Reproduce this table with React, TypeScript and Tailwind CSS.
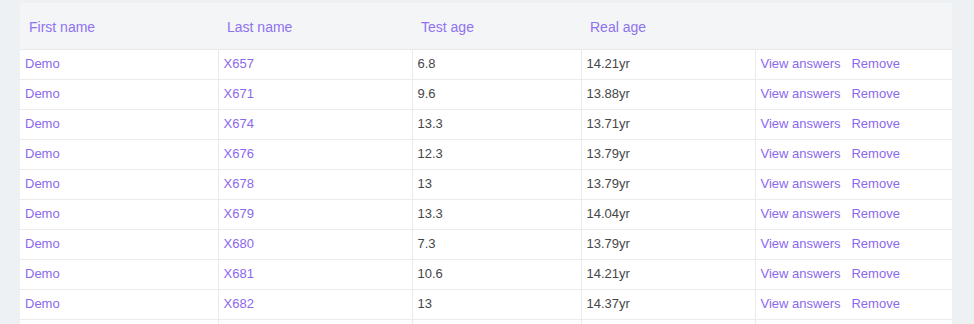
const rows = [
  { first: 'Demo', last: 'X657', test: '6.8', real: '14.21yr' },
  { first: 'Demo', last: 'X671', test: '9.6', real: '13.88yr' },
  { first: 'Demo', last: 'X674', test: '13.3', real: '13.71yr' },
  { first: 'Demo', last: 'X676', test: '12.3', real: '13.79yr' },
  { first: 'Demo', last: 'X678', test: '13', real: '13.79yr' },
  { first: 'Demo', last: 'X679', test: '13.3', real: '14.04yr' },
  { first: 'Demo', last: 'X680', test: '7.3', real: '13.79yr' },
  { first: 'Demo', last: 'X681', test: '10.6', real: '14.21yr' },
  { first: 'Demo', last: 'X682', test: '13', real: '14.37yr' },
  { first: 'Demo', last: 'X683', test: '11.2', real: '14.02yr' },
]

const headers = ['First name', 'Last name', 'Test age', 'Real age', '']

export default function App() {
  return (
    <div
      className="min-h-screen bg-[#eef1f4] pl-[20px] pr-[22px] pt-[3px]"
      style={{ fontFamily: '"Liberation Sans", Arial, sans-serif' }}
    >
      <table className="w-[932px] table-fixed border-collapse bg-white text-[13px]">
        <colgroup>
          <col className="w-[198px]" />
          <col className="w-[194px]" />
          <col className="w-[169px]" />
          <col className="w-[174px]" />
          <col className="w-[197px]" />
        </colgroup>
        <thead>
          <tr className="h-[46px] border-b border-[#e9e9eb] bg-[#f4f5f7]">
            {headers.map((h, i) => (
              <th
                key={i}
                className="px-[9px] pt-[4px] text-left text-[14px] font-normal text-[#8f72ef]"
              >
                {h}
              </th>
            ))}
          </tr>
        </thead>
        <tbody>
          {rows.map((r) => (
            <tr key={r.last} className="h-[30px] border-b border-[#ebebeb]">
              <td className="px-[5px] text-[#8b68ee]">{r.first}</td>
              <td className="border-l border-[#ebebeb] px-[5px] text-[#8b68ee]">{r.last}</td>
              <td className="border-l border-[#ebebeb] px-[5px] text-[#474747]">{r.test}</td>
              <td className="border-l border-[#ebebeb] px-[5px] text-[#474747]">{r.real}</td>
              <td className="border-l border-[#ebebeb] px-[5px] text-[#8b68ee]">
                <span className="mr-[11px] cursor-pointer">View answers</span>
                <span className="cursor-pointer">Remove</span>
              </td>
            </tr>
          ))}
        </tbody>
      </table>
    </div>
  )
}
